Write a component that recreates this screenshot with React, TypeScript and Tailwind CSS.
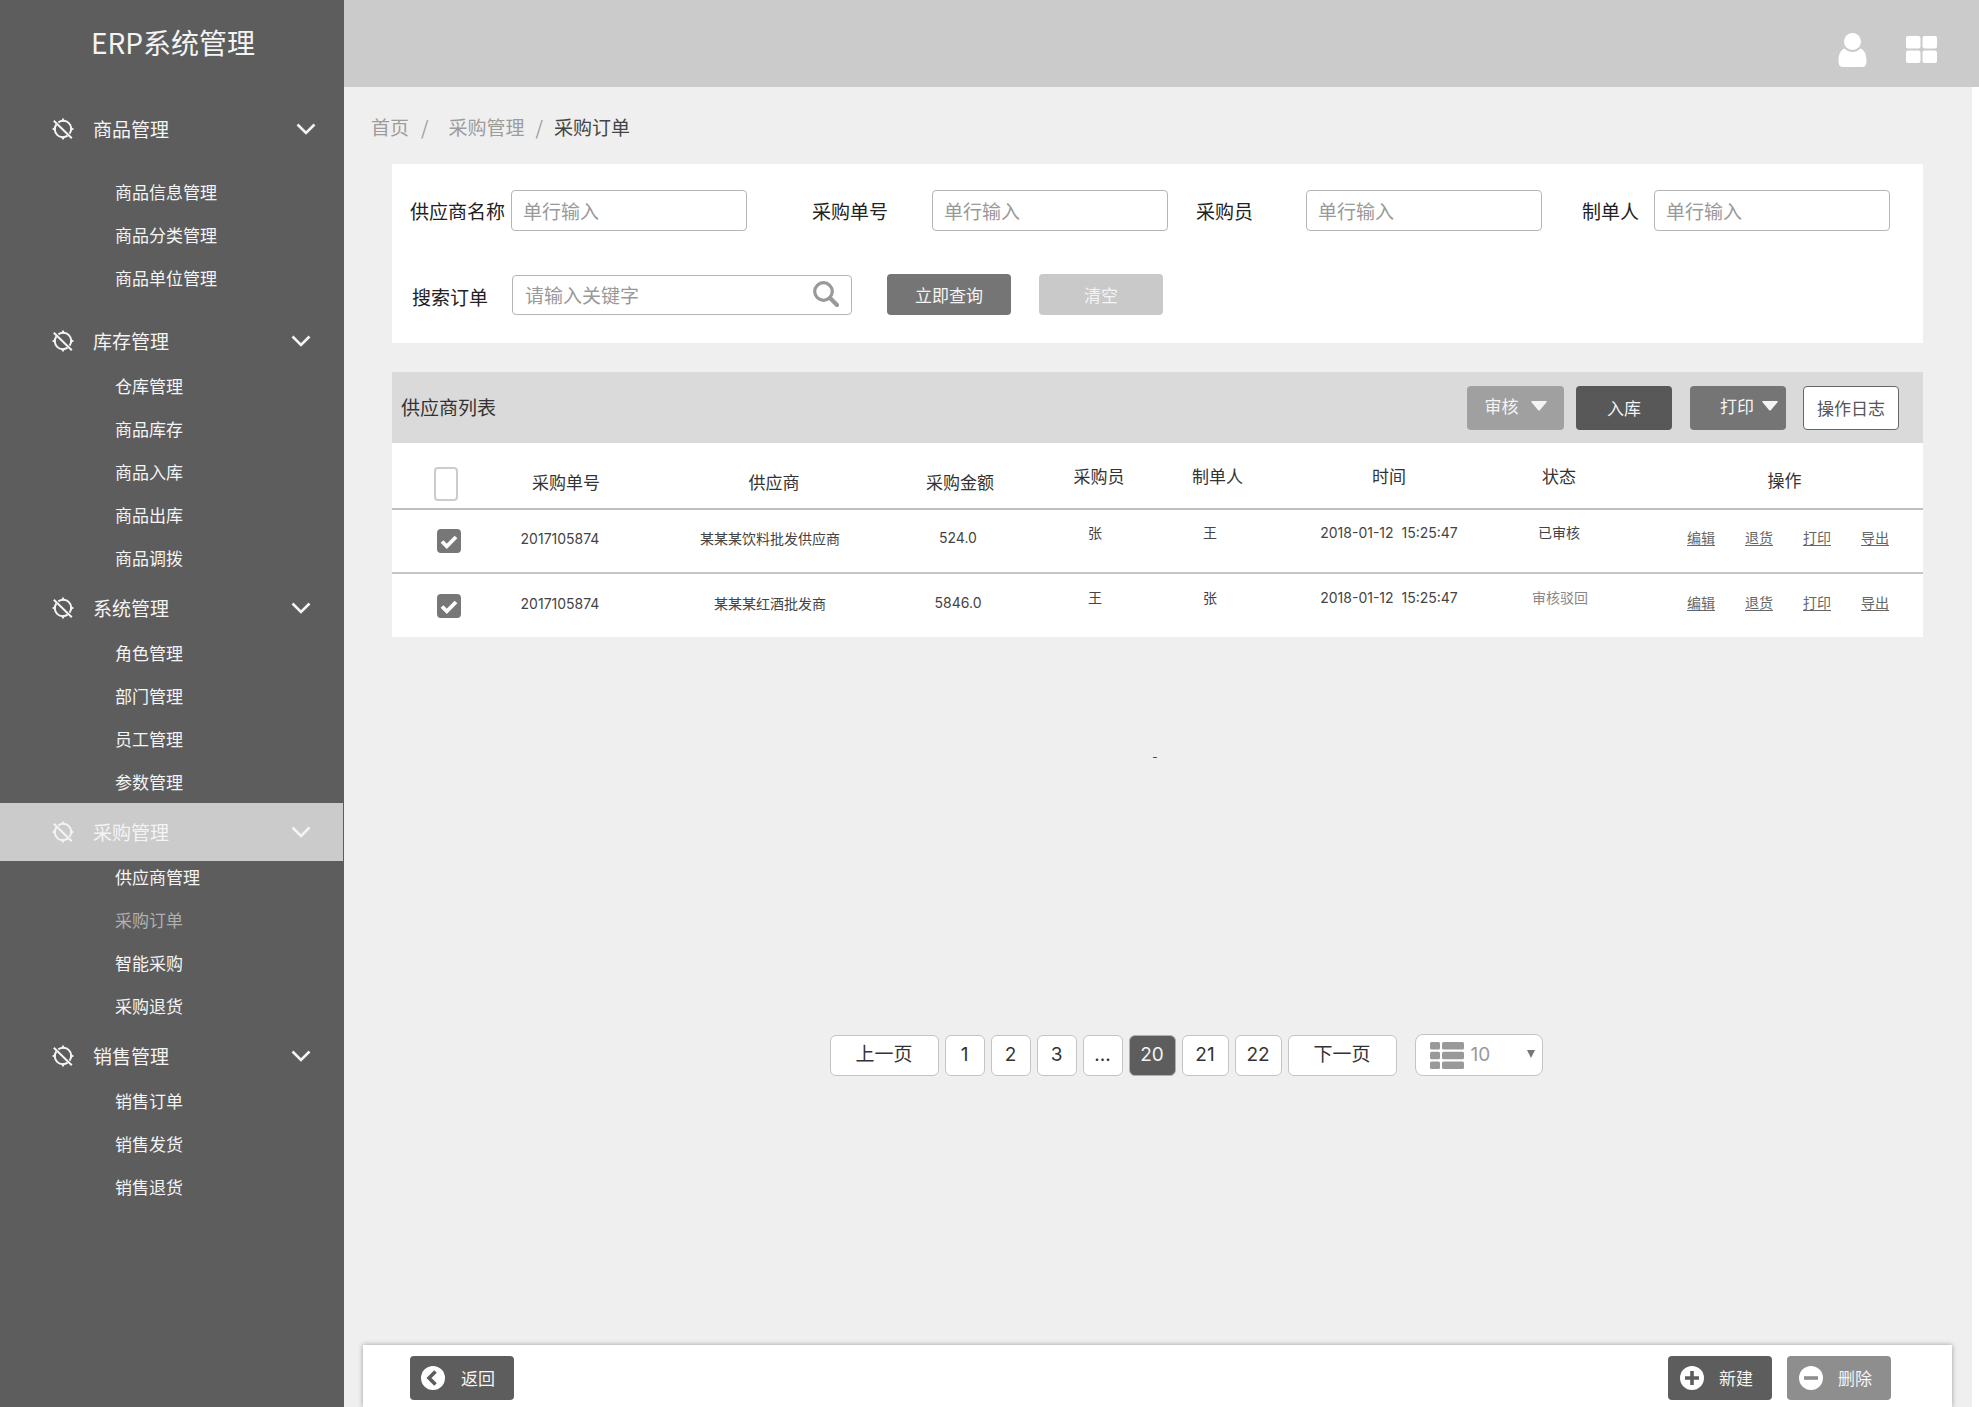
import React, { useState } from "react";

type MenuGroup = {
  title: string;
  items: string[];
};

type Order = {
  id: string;
  supplier: string;
  amount: string;
  buyer: string;
  maker: string;
  time: string;
  status: string;
  rejected?: boolean;
};

const MENU: MenuGroup[] = [
  { title: "商品管理", items: ["商品信息管理", "商品分类管理", "商品单位管理"] },
  { title: "库存管理", items: ["仓库管理", "商品库存", "商品入库", "商品出库", "商品调拨"] },
  { title: "系统管理", items: ["角色管理", "部门管理", "员工管理", "参数管理"] },
  { title: "采购管理", items: ["供应商管理", "采购订单", "智能采购", "采购退货"] },
  { title: "销售管理", items: ["销售订单", "销售发货", "销售退货"] }
];

const ORDERS: Order[] = [
  { id: "2017105874", supplier: "某某某饮料批发供应商", amount: "524.0", buyer: "张", maker: "王", time: "2018-01-12\u00a0\u00a015:25:47", status: "已审核" },
  { id: "2017105874", supplier: "某某某红酒批发商", amount: "5846.0", buyer: "王", maker: "张", time: "2018-01-12\u00a0\u00a015:25:47", status: "审核驳回", rejected: true }
];

const ROW_LINKS = ["编辑", "退货", "打印", "导出"];

const PAGES = ["1", "2", "3", "...", "20", "21", "22"];

const FIELDS = [
  { id: "supplier", label: "供应商名称", labelClass: "w-[101px]" },
  { id: "order-no", label: "采购单号", labelClass: "w-[120px] ml-[65px]" },
  { id: "buyer", label: "采购员", labelClass: "w-[110px] ml-7" },
  { id: "maker", label: "制单人", labelClass: "w-[72px] ml-10" }
];

function TargetOffIcon() {
  return (
    <svg width="24" height="24" viewBox="0 0 24 24" fill="none" stroke="currentColor" strokeWidth="2" className="shrink-0">
      <path d="M7.400 5.400A8 8 0 0 1 18.600 16.600M16.600 18.600A8 8 0 0 1 5.400 7.400" />
      <path d="M2.800 3.800 20.800 21.200" />
      <path d="M9.800 4.600 12 .8l2.200 3.800zM9.800 19.400 12 23.200l2.200-3.800zM4.600 9.800.8 12l3.800 2.200zM19.400 9.800 23.200 12l-3.800 2.200z" fill="currentColor" stroke="none" />
    </svg>
  );
}

function Chevron() {
  return (
    <svg width="20" height="12" viewBox="0 0 20 12" fill="none" stroke="currentColor" strokeWidth="2.6">
      <path d="m1.500 1.500 8.500 8.500 8.500-8.500" />
    </svg>
  );
}

function Caret() {
  return (
    <svg width="16" height="10" viewBox="0 0 16 10" fill="currentColor" className="shrink-0">
      <path d="M1 0h14q1.500 0 .5 1.200L9 9q-1 1-2 0L.5 1.200Q-.5 0 1 0z" />
    </svg>
  );
}

function Sidebar() {
  return (
    <aside className="w-[344px] shrink-0 bg-[#5d5d5d] text-[#f4f4f4]">
      <h1 className="h-[100px] pl-[91px] pt-[22px] text-[28px] leading-10">ERP系统管理</h1>
      <nav>
        {MENU.map((group) => {
          const active = group.title === "采购管理";
          return (
            <section key={group.title} className="group pb-[9px] first:pb-[22px]">
              <button
                type="button"
                className={`flex h-[58px] w-[343px] items-center pl-[51px] pr-8 text-[19px] group-first:pr-[27px] ${active ? "bg-[#cbcbcb]" : ""}`}
              >
                <TargetOffIcon />
                <span className="ml-[18px] flex-1 text-left">{group.title}</span>
                <Chevron />
              </button>
              <ul className="flex flex-col gap-[19px] pl-[115px] pt-1 text-[17px] leading-6 group-first:pt-[22px]">
                {group.items.map((item) => (
                  <li key={item}>
                    <a href="#" className={item === "采购订单" ? "text-[#b0b0b0]" : ""}>{item}</a>
                  </li>
                ))}
              </ul>
            </section>
          );
        })}
      </nav>
    </aside>
  );
}

function TopBar() {
  return (
    <header className="flex h-[87px] items-center justify-end gap-[39px] bg-[#cbcbcb] pr-[42px] pt-3 text-white">
      <button type="button" aria-label="用户">
        <svg width="29" height="34" viewBox="0 0 29 34" fill="currentColor">
          <circle cx="14.500" cy="8.500" r="8.500" />
          <path d="M6.500 15.500Q10 19 14.500 19t8-3.500C27 17.500 28.500 22 28.500 28.500Q28.500 34 24 34H5Q.5 34 .5 28.500C.5 22 2 17.500 6.500 15.500z" />
        </svg>
      </button>
      <button type="button" aria-label="应用">
        <svg width="31" height="27" viewBox="0 0 31 27" fill="currentColor">
          <rect width="14.500" height="12.500" rx="2" />
          <rect x="16.500" width="14.500" height="12.500" rx="2" />
          <rect y="14.500" width="14.500" height="12.500" rx="2" />
          <rect x="16.500" y="14.500" width="14.500" height="12.500" rx="2" />
        </svg>
      </button>
    </header>
  );
}

function Breadcrumb() {
  return (
    <nav className="flex h-[77px] items-center pl-[27px] pt-1 text-[19px] text-[#9c9c9c]">
      <a href="#">首页</a>
      <span className="ml-3">/</span>
      <a href="#" className="ml-5">采购管理</a>
      <span className="mx-[11px]">/</span>
      <span className="text-[#444]">采购订单</span>
    </nav>
  );
}

function FilterPanel() {
  return (
    <form className="bg-white pb-7 pl-[18px] pr-[33px] pt-[26px] text-[19px] text-[#222]">
      <div className="flex items-center">
        {FIELDS.map((field) => (
          <React.Fragment key={field.id}>
            <label htmlFor={field.id} className={`shrink-0 pt-0.5 ${field.labelClass}`}>{field.label}</label>
            <input
              id={field.id}
              placeholder="单行输入"
              className="h-[41px] min-w-0 flex-1 rounded border border-[#b5b5b5] px-[11px] placeholder:text-[#999]"
            />
          </React.Fragment>
        ))}
      </div>
      <div className="mt-[43px] flex items-center">
        <label htmlFor="keyword" className="w-[102px] shrink-0 pl-0.5 pt-1.5">搜索订单</label>
        <div className="relative w-[340px]">
          <input
            id="keyword"
            placeholder="请输入关键字"
            className="h-10 w-full rounded border border-[#b5b5b5] pl-3 pr-12 placeholder:text-[#999]"
          />
          <svg width="26" height="26" viewBox="0 0 26 26" fill="none" stroke="#999" className="absolute right-[13px] top-[6px]">
            <circle cx="10.500" cy="10.500" r="8.800" strokeWidth="3.200" />
            <path d="m17 17 7 7" strokeWidth="4.200" strokeLinecap="round" />
          </svg>
        </div>
        <button type="button" className="ml-[35px] h-[41px] w-[124px] rounded bg-[#757575] text-[17px] text-[#f4f4f4]">立即查询</button>
        <button type="reset" className="ml-7 h-[41px] w-[124px] rounded bg-[#c9c9c9] text-[17px] text-[#f4f4f4]">清空</button>
      </div>
    </form>
  );
}

function RowCheckbox({ label, checked, onChange }: { label: string; checked: boolean; onChange: () => void }) {
  return (
    <span className="relative inline-block size-6 align-middle">
      <input
        type="checkbox"
        aria-label={label}
        checked={checked}
        onChange={onChange}
        className="block size-6 appearance-none rounded border-2 border-[#ccc] checked:border-[#777] checked:bg-[#777]"
      />
      {checked && (
        <svg width="24" height="24" viewBox="0 0 24 24" fill="none" stroke="white" strokeWidth="3.800" className="pointer-events-none absolute inset-0">
          <path d="m5 12.500 4.800 4.800L19 8" />
        </svg>
      )}
    </span>
  );
}

function OrderTable() {
  const [selected, setSelected] = useState<boolean[]>([true, true]);

  const toggle = (index: number) => setSelected(selected.map((s, i) => (i === index ? !s : s)));

  return (
    <section className="mt-[29px]">
      <div className="flex h-[71px] items-center bg-[#dadada] pl-[9px] pr-6 text-[17px] text-[#f4f4f4]">
        <h2 className="flex-1 text-[19px] text-[#333]">供应商列表</h2>
        <button type="button" className="flex h-11 w-[97px] items-center justify-center gap-3 rounded bg-[#a0a0a0] pb-1">
          审核 <Caret />
        </button>
        <button type="button" className="ml-3 h-11 w-24 rounded bg-[#585858]">入库</button>
        <button type="button" className="ml-[18px] flex h-11 w-24 items-center justify-end gap-2 rounded bg-[#757575] pb-1 pr-2">
          打印 <Caret />
        </button>
        <button type="button" className="ml-[17px] h-11 w-24 rounded border border-[#666] bg-white text-[#555]">操作日志</button>
      </div>

      <table className="w-full table-fixed bg-white text-center text-sm text-[#444]">
        <colgroup>
          <col className="w-[114px]" />
          <col className="w-[108px]" />
          <col className="w-[312px]" />
          <col className="w-[64px]" />
          <col className="w-[194px]" />
          <col className="w-[52px]" />
          <col className="w-[296px]" />
          <col className="w-[54px]" />
          <col />
        </colgroup>
        <thead>
          <tr className="h-[66px] whitespace-nowrap border-b-2 border-[#c0c0c0] text-[17px] text-[#333] [&>th]:font-normal">
            <th className="pr-1.5 pt-4">
              <input
                type="checkbox"
                aria-label="全选"
                className="mx-auto block h-[34px] w-6 appearance-none rounded border-2 border-[#ccc] checked:bg-[#777]"
              />
            </th>
            <th className="pl-3 pt-3.5">采购单号</th>
            <th className="pl-2 pt-3.5">供应商</th>
            <th className="pt-3.5">采购金额</th>
            <th className="pl-6 pt-0.5">采购员</th>
            <th className="pl-2 pt-0.5">制单人</th>
            <th className="pl-2.5 pt-0.5">时间</th>
            <th className="pt-0.5">状态</th>
            <th className="pl-[60px] pt-2.5">操作</th>
          </tr>
        </thead>
        <tbody className="font-['Inter','Noto_Sans_CJK_SC',sans-serif]">
          {ORDERS.map((order, i) => (
            <tr key={i} className="h-16 whitespace-nowrap border-b-2 border-[#c6c6c6] last:border-0">
              <td><RowCheckbox label={order.supplier} checked={selected[i]} onChange={() => toggle(i)} /></td>
              <td className="pb-1">{order.id}</td>
              <td className="pb-1">{order.supplier}</td>
              <td className="pb-1.5">{order.amount}</td>
              <td className="pb-4 pl-4">{order.buyer}</td>
              <td className="pb-4">{order.maker}</td>
              <td className="pb-4 pl-2.5">{order.time}</td>
              <td className={`pb-4 ${order.rejected ? "text-[#888]" : ""}`}>{order.status}</td>
              <td className="pb-1.5">
                <div className="flex justify-end gap-[30px] pr-[34px] text-[#666]">
                  {ROW_LINKS.map((link) => (
                    <a key={link} href="#" className="underline underline-offset-2">{link}</a>
                  ))}
                </div>
              </td>
            </tr>
          ))}
        </tbody>
      </table>
    </section>
  );
}

function Pagination() {
  return (
    <nav className="flex items-center justify-center gap-1.5 pl-14 font-['Inter','Noto_Sans_CJK_SC',sans-serif] text-[19px] text-[#333]">
      <button type="button" className="h-[41px] w-[109px] rounded-md border border-[#c4c4c4] bg-white">上一页</button>
      {PAGES.map((page) => (
        <button
          key={page}
          type="button"
          className={`h-[41px] rounded-md border ${page.length === 2 ? "w-[47px]" : "w-10"} ${
            page === "20" ? "border-[#b0b0b0] bg-[#5d5d5d] text-[#f4f4f4]" : "border-[#c4c4c4] bg-white"
          }`}
        >
          {page}
        </button>
      ))}
      <button type="button" className="h-[41px] w-[109px] rounded-md border border-[#c4c4c4] bg-white">下一页</button>
      <div className="relative ml-3 text-[#999]">
        <select aria-label="每页条数" className="h-[42px] w-32 appearance-none rounded-lg border border-[#c4c4c4] bg-white pl-[55px]">
          <option>10</option>
          <option>20</option>
        </select>
        <svg width="34" height="27" viewBox="0 0 34 27" fill="#999" className="pointer-events-none absolute left-[15px] top-2">
          <rect width="10" height="7.500" rx="1.500" />
          <rect x="12" width="22" height="7.500" rx="1.500" />
          <rect y="9.800" width="10" height="7.500" rx="1.500" />
          <rect x="12" y="9.800" width="22" height="7.500" rx="1.500" />
          <rect y="19.500" width="10" height="7.500" rx="1.500" />
          <rect x="12" y="19.500" width="22" height="7.500" rx="1.500" />
        </svg>
        <svg width="8" height="8" viewBox="0 0 8 8" fill="#777" className="pointer-events-none absolute right-2 top-4">
          <path d="M0 0h8L4 8z" />
        </svg>
      </div>
    </nav>
  );
}

function ActionBar() {
  return (
    <footer className="ml-[19px] mr-5 mt-auto flex h-[62px] items-start bg-white pl-[47px] pr-[61px] pt-[11px] text-[17px] text-[#f4f4f4] shadow-[0_0_5px_rgba(0,0,0,0.35)]">
      <button type="button" className="flex h-11 w-[104px] items-center gap-4 rounded bg-[#5d5d5d] pl-[11px]">
        <svg width="24" height="24" viewBox="0 0 24 24">
          <circle cx="12" cy="12" r="12" fill="white" />
          <path d="m14.500 5.500-6.500 6.500 6.500 6.500" fill="none" stroke="#5d5d5d" strokeWidth="3.600" />
        </svg>
        返回
      </button>
      <button type="button" className="ml-auto flex h-11 w-[104px] items-center gap-[15px] rounded bg-[#5d5d5d] pl-3">
        <svg width="24" height="24" viewBox="0 0 24 24">
          <circle cx="12" cy="12" r="12" fill="white" />
          <path d="M12 5v14M5 12h14" fill="none" stroke="#5d5d5d" strokeWidth="3.600" />
        </svg>
        新建
      </button>
      <button type="button" className="ml-[15px] flex h-11 w-[104px] items-center gap-[15px] rounded bg-[#8e8e8e] pl-3">
        <svg width="24" height="24" viewBox="0 0 24 24">
          <circle cx="12" cy="12" r="12" fill="white" />
          <path d="M5 12h14" fill="none" stroke="#8e8e8e" strokeWidth="3.600" />
        </svg>
        删除
      </button>
    </footer>
  );
}

export default function App() {
  return (
    <div className="flex min-h-screen bg-[#efefef] font-['Noto_Sans_CJK_SC',sans-serif]">
      <Sidebar />
      <div className="flex min-w-0 flex-1 flex-col">
        <TopBar />
        <main className="flex flex-1 flex-col border-r-[7px] border-white">
          <Breadcrumb />
          <div className="ml-12 mr-[49px]">
            <FilterPanel />
            <OrderTable />
          </div>
          <p className="h-[397px] pr-1.5 pt-[108px] text-center text-sm text-[#444]">-</p>
          <Pagination />
          <ActionBar />
        </main>
      </div>
    </div>
  );
}
